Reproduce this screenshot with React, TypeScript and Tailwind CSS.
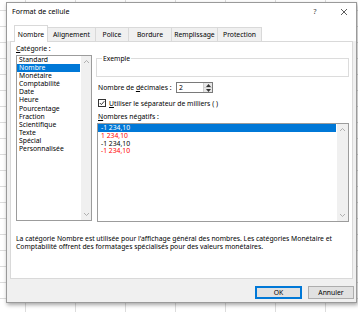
import React from 'react';

const categories = [
  'Standard',
  'Nombre',
  'Monétaire',
  'Comptabilité',
  'Date',
  'Heure',
  'Pourcentage',
  'Fraction',
  'Scientifique',
  'Texte',
  'Spécial',
  'Personnalisée',
];

const tabs = [
  { label: 'Nombre', w: 'w-[34px]', active: true },
  { label: 'Alignement', w: 'w-[49px]' },
  { label: 'Police', w: 'w-[34px]' },
  { label: 'Bordure', w: 'w-[44px]' },
  { label: 'Remplissage', w: 'w-[47px]' },
  { label: 'Protection', w: 'w-[45px]' },
];

const negatives = [
  { text: '-1 234,10', selected: true },
  { text: '1 234,10', red: true },
  { text: '-1 234,10' },
  { text: '-1 234,10', red: true },
];

const Chevron = ({ up }: { up?: boolean }) => (
  <svg width="7" height="5" viewBox="0 0 7 5" className="block">
    <polyline
      points={up ? '1,4 3.5,1.5 6,4' : '1,1 3.5,3.5 6,1'}
      fill="none"
      stroke="#a0a0a0"
      strokeWidth="0.8"
    />
  </svg>
);

const Scrollbar = ({ w }: { w: string }) => (
  <div className={`${w} h-full bg-[#f0f0f0] flex flex-col items-center justify-between py-[3px]`}>
    <Chevron up />
    <Chevron />
  </div>
);

const App = () => {
  return (
    <div
      className="relative w-[358px] h-[312px] overflow-hidden bg-white bg-[linear-gradient(to_bottom,#dcdcdc_1px,transparent_1px),linear-gradient(to_right,#dcdcdc_1px,transparent_1px)] bg-size-[50px_16px] bg-position-[25px_10px] text-black text-[6.8px]"
      style={{ fontFamily: '"Noto Sans", "Liberation Sans", sans-serif' }}
    >
      {/* dialog window */}
      <div className="absolute left-[6px] top-[2px] w-[351px] h-[301px] border border-[#9a9a9a] bg-[#f0f0f0] shadow-[1px_2px_4px_rgba(0,0,0,0.35)] flex flex-col">
        {/* title bar */}
        <div className="h-[17px] bg-white flex items-center">
          <span className="pl-[5px] text-[7.1px] leading-[9px]">Format de cellule</span>
          <div className="ml-auto flex items-center h-full">
            <span className="w-[34px] text-center text-[7.5px] text-[#444]">?</span>
            <span className="w-[24px] flex justify-center">
              <svg width="8" height="8" viewBox="0 0 8 8">
                <path d="M1 1 L7 7 M7 1 L1 7" stroke="#333" strokeWidth="0.8" />
              </svg>
            </span>
          </div>
        </div>

        {/* tabs */}
        <div className="h-[21px] flex items-end pl-[7px] bg-white">
          {tabs.map((t, i) => (
            <div
              key={t.label}
              className={`${t.w} ${i > 0 ? '-ml-px' : ''} ${
                t.active
                  ? 'h-[17px] -mb-px bg-white border border-b-0 border-[#d9d9d9] relative z-10'
                  : 'h-[14px] bg-[#f0f0f0] border border-b-0 border-[#d9d9d9]'
              } flex items-center justify-center leading-[9px] whitespace-nowrap`}
            >
              {t.label}
            </div>
          ))}
        </div>

        {/* panel */}
        <div className="mx-[3px] h-[238px] bg-white border border-[#d9d9d9] flex flex-col">
          <div className="flex pl-[5px] gap-[4px]">
            {/* left column */}
            <div className="w-[76px] flex flex-col pt-[2px]">
              <div className="leading-[9px] h-[9px]">
                <span className="underline underline-offset-1">C</span>atégorie :
              </div>
              <div className="mt-[2px] h-[166px] border border-[#9c9c9c] flex">
                <div className="flex-1 flex flex-col">
                  {categories.map((c, i) => (
                    <div
                      key={c}
                      className={`h-[8.1px] leading-[8.1px] pl-[2px] whitespace-nowrap ${
                        i === 1 ? 'bg-[#0078d7] text-white mr-[1px]' : ''
                      }`}
                    >
                      {c}
                    </div>
                  ))}
                </div>
                <Scrollbar w="w-[10px]" />
              </div>
            </div>

            {/* right column */}
            <div className="w-[253px] flex flex-col">
              <div className="relative mt-[16px] h-[19px] border border-[#dcdcdc]">
                <span className="absolute left-[5px] -top-[5px] bg-white leading-[9px] px-px">Exemple</span>
              </div>

              <div className="mt-[5px] h-[11px] flex items-center pl-[2px]">
                <span className="w-[78px] leading-[9px]">
                  Nombre de <span className="underline underline-offset-1">d</span>écimales :
                </span>
                <div className="w-[37px] h-[11px] border border-[#7a7a7a] flex bg-white">
                  <span className="flex-1 pl-[2px] leading-[9px]">2</span>
                  <div className="w-[9px] flex flex-col border-l border-[#cfcfcf]">
                    <div className="flex-1 bg-[#e8e8e8] flex items-center justify-center border-b border-[#cfcfcf]">
                      <svg width="5" height="3" viewBox="0 0 5 3">
                        <path d="M0 3 L2.5 0 L5 3 Z" fill="#333" />
                      </svg>
                    </div>
                    <div className="flex-1 bg-[#e8e8e8] flex items-center justify-center">
                      <svg width="5" height="3" viewBox="0 0 5 3">
                        <path d="M0 0 L2.5 3 L5 0 Z" fill="#333" />
                      </svg>
                    </div>
                  </div>
                </div>
              </div>

              <div className="mt-[6px] h-[8px] flex items-center pl-[2px] gap-[3px]">
                <div className="w-[8px] h-[8px] border border-[#333] bg-white flex items-center justify-center">
                  <svg width="6" height="6" viewBox="0 0 6 6">
                    <polyline points="0.8,3 2.4,4.6 5.3,1.2" fill="none" stroke="#222" strokeWidth="0.9" />
                  </svg>
                </div>
                <span className="leading-[9px]">
                  <span className="underline underline-offset-1">U</span>tiliser le séparateur de milliers ( )
                </span>
              </div>

              <div className="mt-[5px] h-[9px] leading-[9px] pl-[2px]">
                <span className="underline underline-offset-1">N</span>ombres négatifs :
              </div>

              <div className="mt-[2px] ml-[1px] h-[99px] border border-[#9c9c9c] flex">
                <div className="flex-1 flex flex-col">
                  {negatives.map((n, i) => (
                    <div
                      key={i}
                      className={`h-[7.8px] leading-[7.8px] pl-[3px] ${
                        n.selected ? 'bg-[#0078d7] text-white mr-[1px]' : n.red ? 'text-[#ff0000]' : ''
                      }`}
                    >
                      {n.text}
                    </div>
                  ))}
                </div>
                <Scrollbar w="w-[11px]" />
              </div>
            </div>
          </div>

          <div className="mt-[13px] pl-[5px] leading-[8px]">
            <p>La catégorie Nombre est utilisée pour l'affichage général des nombres. Les catégories Monétaire et</p>
            <p>Comptabilité offrent des formatages spécialisés pour des valeurs monétaires.</p>
          </div>
        </div>

        {/* buttons */}
        <div className="mt-[7px] flex justify-end gap-[6px] pr-[2px]">
          <button className="w-[47px] h-[13px] bg-[#e1e1e1] border border-[#0078d7] shadow-[inset_0_0_0_1px_#0078d7] leading-[9px]">
            OK
          </button>
          <button className="w-[46px] h-[13px] bg-[#e1e1e1] border border-[#adadad] leading-[9px]">
            Annuler
          </button>
        </div>
      </div>
    </div>
  );
};

export default App;
